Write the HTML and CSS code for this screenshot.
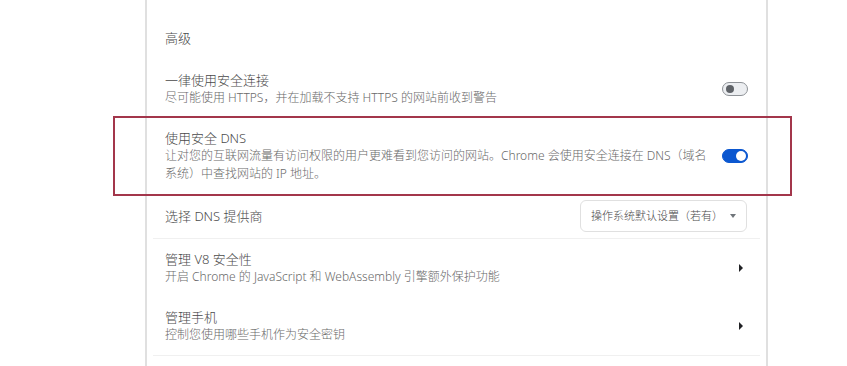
FILE: index.html
```html
<!DOCTYPE html>
<html lang="zh-CN">
<head>
<meta charset="utf-8">
<link rel="stylesheet" href="styles.css">
</head>
<body>
<div class="card">
  <div class="header">高级</div>

  <div class="row row1">
    <div class="text">
      <div class="title">一律使用安全连接</div>
      <div class="sub">尽可能使用 HTTPS，并在加载不支持 HTTPS 的网站前收到警告</div>
    </div>
    <div class="toggle off"><span class="knob"></span></div>
  </div>

  <div class="row row2">
    <div class="text">
      <div class="title">使用安全 DNS</div>
      <div class="sub">让对您的互联网流量有访问权限的用户更难看到您访问的网站。Chrome 会使用安全连接在 DNS（域名<br>系统）中查找网站的 IP 地址。</div>
    </div>
    <div class="toggle on"><span class="knob"></span></div>
  </div>

  <div class="row row3">
    <div class="title">选择 DNS 提供商</div>
    <div class="select">
      <span class="select-text">操作系统默认设置（若有）</span>
      <span class="caret"></span>
    </div>
  </div>

  <div class="divider first"></div>

  <div class="row row4">
    <div class="text">
      <div class="title">管理 V8 安全性</div>
      <div class="sub">开启 Chrome 的 JavaScript 和 WebAssembly 引擎额外保护功能</div>
    </div>
    <span class="arrow"></span>
  </div>

  <div class="row row5">
    <div class="text">
      <div class="title">管理手机</div>
      <div class="sub">控制您使用哪些手机作为安全密钥</div>
    </div>
    <span class="arrow"></span>
  </div>

  <div class="divider last"></div>
</div>

<div class="highlight"></div>
</body>
</html>
```

FILE: styles.css
```css
html, body {
  margin: 0;
  padding: 0;
  background: #ffffff;
}

body {
  width: 847px;
  height: 366px;
  overflow: hidden;
  position: relative;
  font-family: "Segoe UI", "Noto Sans", "Noto Sans CJK SC", sans-serif;
  font-weight: 300;
  color: #4a4a4a;
}

.card {
  margin-left: 145px;
  width: 619px;
  height: 366px;
  border-left: 2px solid #e0e0e0;
  border-right: 2px solid #e0e0e0;
  background: #ffffff;
}

.header {
  padding: 29px 18px 0 18px;
  font-size: 13px;
  line-height: 18px;
  color: #4a4a4a;
}

.row {
  display: flex;
  align-items: center;
  justify-content: space-between;
  padding: 0 18px 0 18px;
}

.row1 { margin-top: 24px; }
.row2 { margin-top: 22px; }
.row3 { margin-top: 17px; }
.row4 { margin-top: 11px; }
.row5 { margin-top: 22px; }

.title {
  font-size: 13px;
  line-height: 18px;
  color: #4a4a4a;
}

.sub {
  font-size: 12px;
  line-height: 18px;
  color: #6a6a6a;
}

.toggle {
  position: relative;
  width: 24px;
  height: 12px;
  border-radius: 8px;
  flex: none;
}

.toggle.off {
  background: #eceef1;
  border: 1px solid #8e9297;
}

.toggle.off .knob {
  position: absolute;
  left: 3px;
  top: 2px;
  width: 8px;
  height: 8px;
  border-radius: 50%;
  background: #5f6368;
}

.toggle.on {
  background: #0b57d0;
  border: 1px solid #0b57d0;
}

.toggle.on .knob {
  position: absolute;
  right: 1px;
  top: 1px;
  width: 10px;
  height: 10px;
  border-radius: 50%;
  background: #ffffff;
}

.select {
  display: flex;
  align-items: center;
  justify-content: space-between;
  box-sizing: border-box;
  width: 167px;
  height: 32px;
  padding: 0 10px 0 10px;
  border: 1px solid #e0e0e0;
  border-radius: 6px;
  margin-right: 1px;
}

.select-text {
  font-size: 11px;
  line-height: 18px;
  color: #4a4a4a;
  white-space: nowrap;
}

.caret {
  width: 0;
  height: 0;
  border-left: 3.5px solid transparent;
  border-right: 3.5px solid transparent;
  border-top: 4px solid #70757a;
}

.divider {
  height: 1px;
  background: #f0f0f0;
  margin-left: 6px;
  margin-right: 6px;
}

.divider.first { margin-top: 6px; }
.divider.last { margin-top: 11px; }

.arrow {
  width: 0;
  height: 0;
  border-top: 4px solid transparent;
  border-bottom: 4px solid transparent;
  border-left: 4px solid #202124;
  margin-right: 5px;
}

.highlight {
  position: absolute;
  left: 113px;
  top: 116px;
  width: 675px;
  height: 76px;
  border: 2px solid #a3364b;
}
```
